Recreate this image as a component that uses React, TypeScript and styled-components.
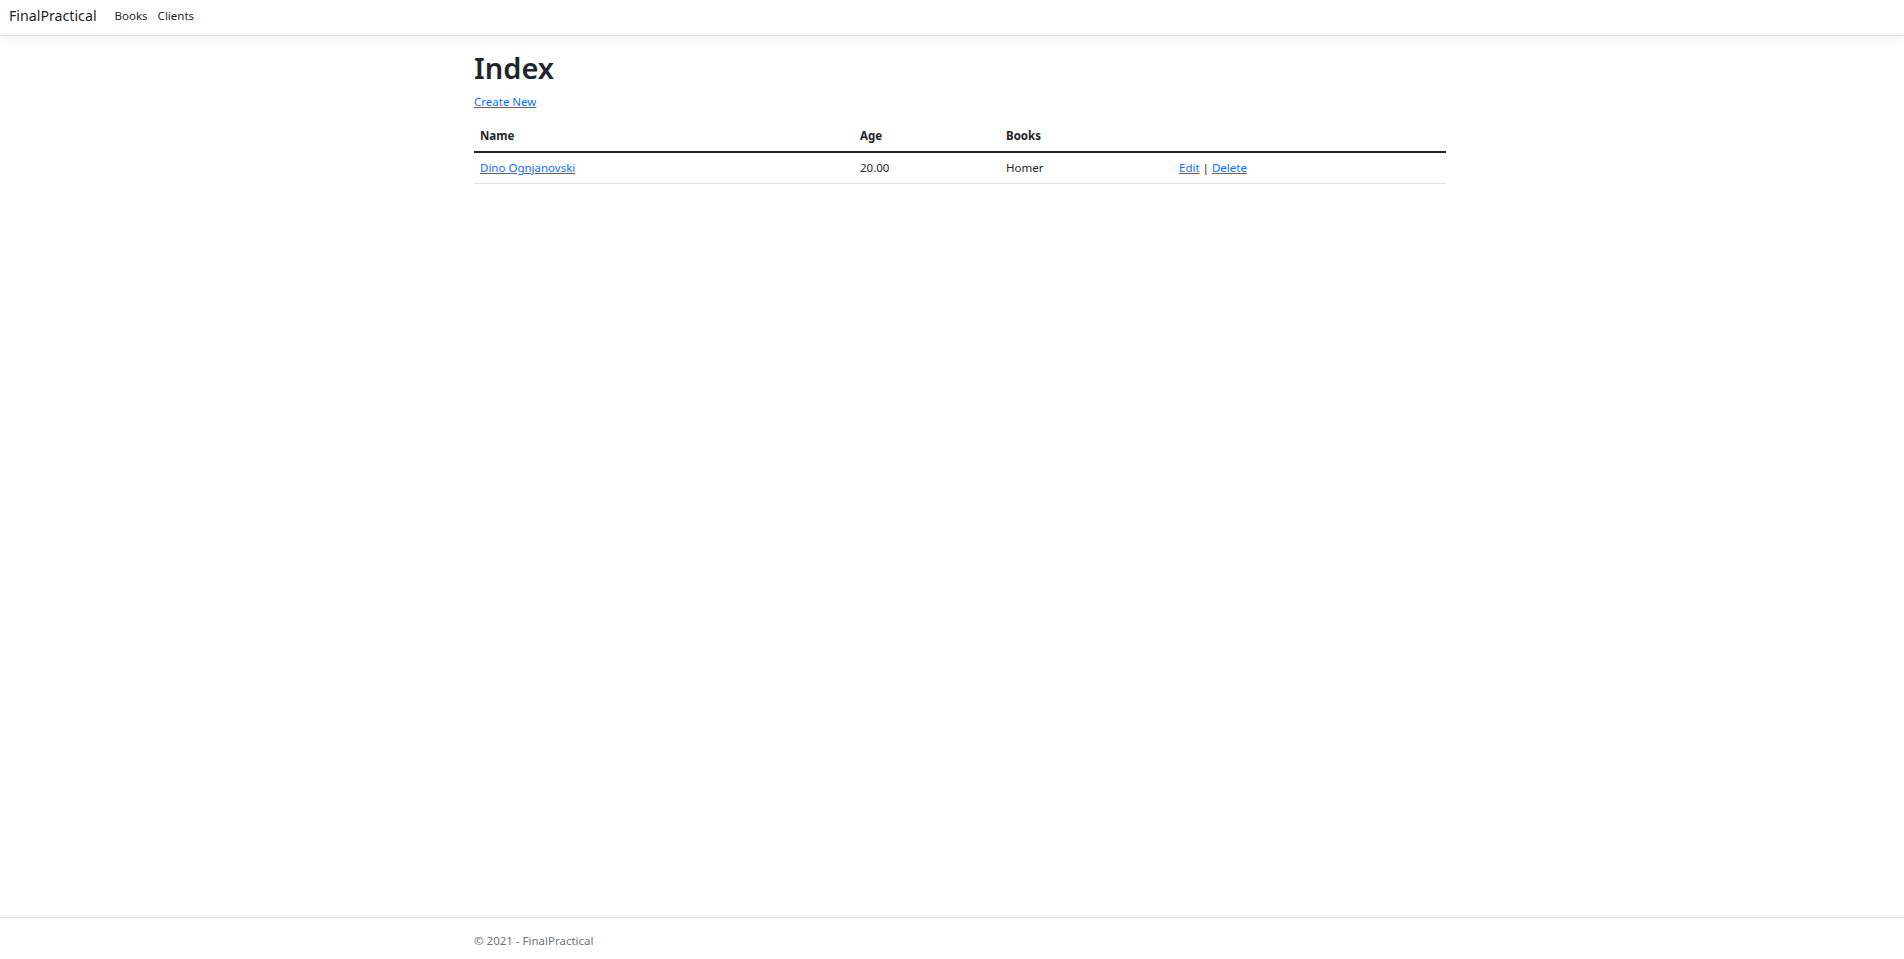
import React from "react";
import styled, { createGlobalStyle } from "styled-components";

const GlobalStyle = createGlobalStyle`
  * { box-sizing: border-box; }
  html, body {
    margin: 0;
    padding: 0;
    height: 100%;
    background: #fff;
    overflow: hidden;
  }
  body {
    font-family: "Noto Sans", "Open Sans", sans-serif;
    font-size: 11.5px;
    line-height: 18px;
    color: #212529;
  }
`;

const clients = [
  { id: 1, name: "Dino Ognjanovski", age: "20.00", books: "Homer" },
];

export default function App() {
  return (
    <Page>
      <GlobalStyle />
      <Navbar>
        <Brand href="#">FinalPractical</Brand>
        <NavList>
          <NavLink href="#">Books</NavLink>
          <NavLink href="#">Clients</NavLink>
        </NavList>
      </Navbar>

      <Main>
        <Title>Index</Title>
        <CreateLine>
          <Link href="#">Create New</Link>
        </CreateLine>
        <Table>
          <colgroup>
            <col style={{ width: 380 }} />
            <col style={{ width: 146 }} />
            <col style={{ width: 173 }} />
            <col />
          </colgroup>
          <thead>
            <tr>
              <Th>Name</Th>
              <Th>Age</Th>
              <Th>Books</Th>
              <Th></Th>
            </tr>
          </thead>
          <tbody>
            {clients.map((c) => (
              <tr key={c.id}>
                <Td>
                  <Link href="#">{c.name}</Link>
                </Td>
                <Td>{c.age}</Td>
                <Td>{c.books}</Td>
                <Td>
                  <Link href="#">Edit</Link> | <Link href="#">Delete</Link>
                </Td>
              </tr>
            ))}
          </tbody>
        </Table>
      </Main>

      <Footer>
        <Container>&copy; 2021 - FinalPractical</Container>
      </Footer>
    </Page>
  );
}

const Page = styled.div`
  display: flex;
  flex-direction: column;
  height: 100vh;
`;

const Navbar = styled.nav`
  display: flex;
  align-items: center;
  height: 36px;
  padding: 0 9px 3px;
  background: #fff;
  border-bottom: 1px solid #dee2e6;
  box-shadow: 0 3px 9px rgba(0, 0, 0, 0.05);
  flex-shrink: 0;
`;

const Brand = styled.a`
  font-size: 14.2px;
  color: rgba(0, 0, 0, 0.9);
  text-decoration: none;
  margin-right: 13px;
  line-height: 22px;
`;

const NavList = styled.div`
  display: flex;
`;

const NavLink = styled.a`
  color: #212529;
  text-decoration: none;
  font-size: 11.5px;
  padding: 0 5px;
  line-height: 18px;
`;

const Container = styled.div`
  width: 988px;
  margin: 0 auto;
  padding-left: 16px;
  white-space: nowrap;
`;

const Main = styled(Container)`
  flex: 1;
  padding-top: 14px;
`;

const Title = styled.h1`
  margin: 0 0 7px;
  font-size: 29px;
  font-weight: 600;
  line-height: 36px;
`;

const CreateLine = styled.p`
  margin: 0 0 10px;
`;

const Link = styled.a`
  color: #0d6efd;
  text-decoration: underline;
`;

const Table = styled.table`
  width: 972px;
  table-layout: fixed;
  border-collapse: collapse;
`;

const Th = styled.th`
  text-align: left;
  font-weight: 700;
  padding: 6px;
  border-bottom: 2px solid #212529;
`;

const Td = styled.td`
  padding: 6px;
  border-bottom: 1px solid #dee2e6;
`;

const Footer = styled.footer`
  height: 42px;
  border-top: 1px solid #dee2e6;
  color: #6c757d;
  line-height: 45px;
  flex-shrink: 0;
`;
